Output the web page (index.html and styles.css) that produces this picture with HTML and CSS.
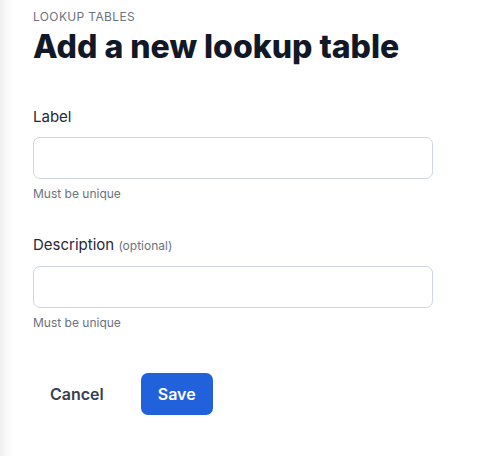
FILE: index.html
```html
<!DOCTYPE html>
<html lang="en">
<head>
<meta charset="utf-8">
<title>Add a new lookup table</title>
<link rel="stylesheet" href="styles.css">
</head>
<body>
<main class="page">
  <header class="page-header">
    <div class="eyebrow">Lookup tables</div>
    <h1 class="title">Add a new lookup table</h1>
  </header>
  <form class="form">
    <div class="field">
      <label class="field-label" for="label">Label</label>
      <input class="field-input" id="label" type="text">
      <div class="field-help">Must be unique</div>
    </div>
    <div class="field">
      <label class="field-label" for="desc">Description <span class="optional">(optional)</span></label>
      <input class="field-input" id="desc" type="text">
      <div class="field-help">Must be unique</div>
    </div>
    <div class="actions">
      <button type="button" class="btn btn-ghost">Cancel</button>
      <button type="button" class="btn btn-primary">Save</button>
    </div>
  </form>
</main>
</body>
</html>
```

FILE: styles.css
```css
* { box-sizing: border-box; }
html, body { margin: 0; padding: 0; }
body {
  font-family: Inter, "Noto Sans", sans-serif;
  background: linear-gradient(to right, #efefef 0, #f8f8f8 6px, #ffffff 14px);
  min-height: 456px;
  color: #111827;
}
.page {
  padding: 9px 0 0 33px;
}
.eyebrow {
  font-size: 12px;
  line-height: 16px;
  text-transform: uppercase;
  letter-spacing: 0.03em;
  color: #6b7280;
}
.title {
  margin: 2px 0 0;
  font-size: 32px;
  line-height: 40px;
  font-weight: 800;
  color: #111827;
}
.form {
  margin-top: 40px;
  width: 400px;
  display: flex;
  flex-direction: column;
}
.field {
  display: flex;
  flex-direction: column;
}
.field + .field { margin-top: 33px; }
.field-label {
  font-size: 15px;
  line-height: 20px;
  font-weight: 400;
  color: #1f2937;
}
.optional {
  font-size: 12px;
  font-weight: 400;
  color: #6b7280;
}
.field-input {
  margin-top: 10px;
  height: 42px;
  width: 400px;
  border: 1px solid #cfd5e1;
  border-radius: 7px;
  background: #fff;
  font: inherit;
  padding: 0 12px;
}
.field-help {
  margin-top: 7px;
  font-size: 12px;
  line-height: 16px;
  color: #6b7280;
}
.actions {
  margin-top: 42px;
  display: flex;
  gap: 20px;
}
.btn {
  height: 42px;
  padding: 0 17px;
  border: 0;
  border-radius: 7px;
  font-family: Inter, "Noto Sans", sans-serif;
  font-size: 16px;
  font-weight: 600;
  cursor: pointer;
}
.btn-ghost {
  background: transparent;
  color: #374151;
}
.btn-primary {
  background: #2261dc;
  color: #ffffff;
}
```
